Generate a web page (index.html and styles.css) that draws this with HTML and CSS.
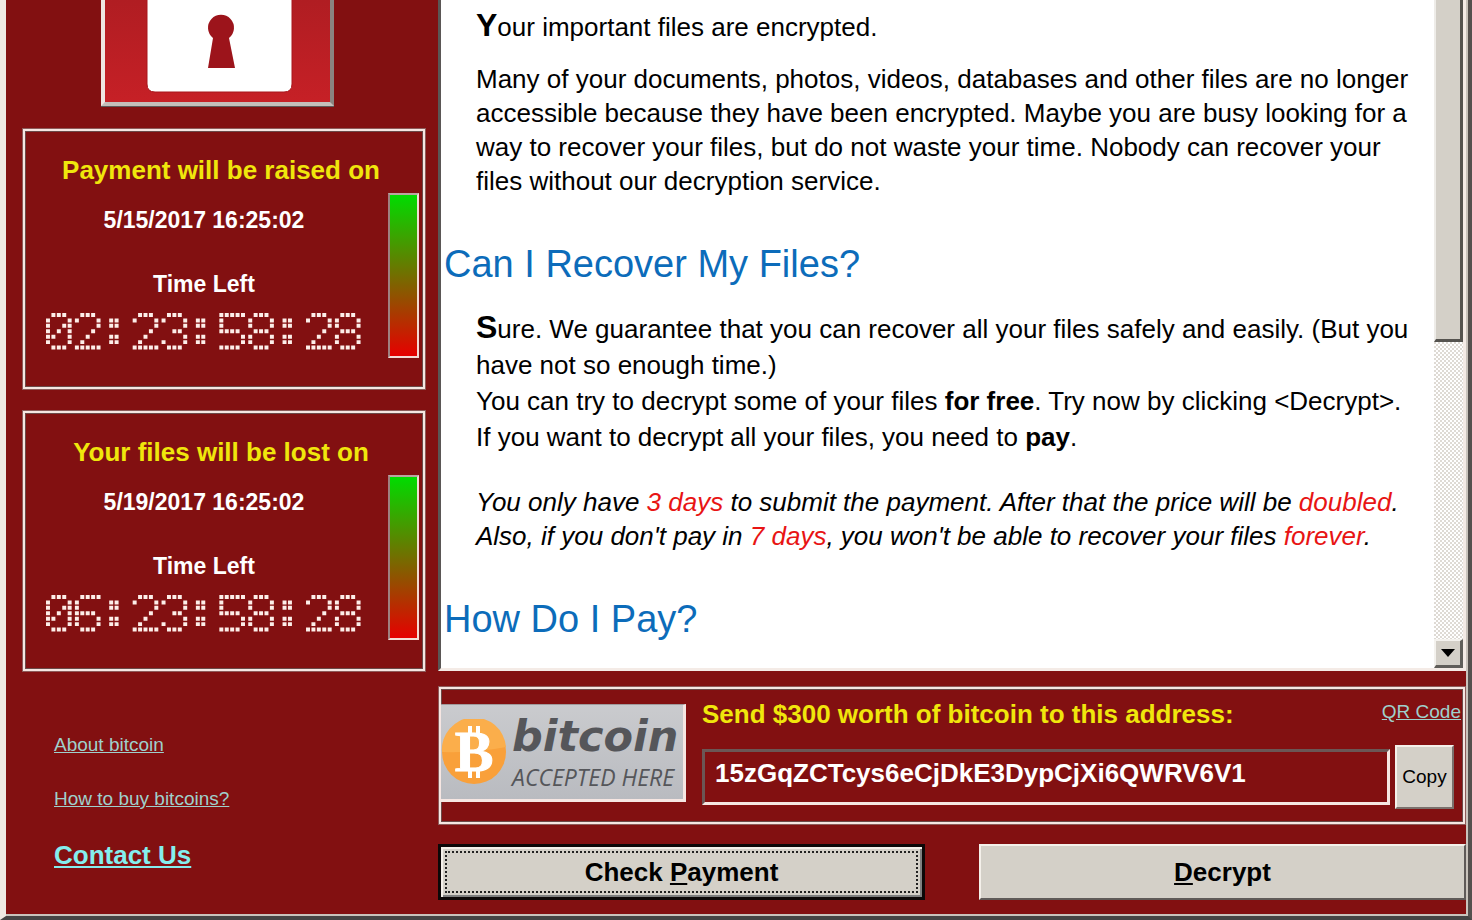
FILE: index.html
```
<!DOCTYPE html>
<html lang="en">
<head>
  <meta charset="UTF-8">
  <meta name="viewport" content="width=device-width, initial-scale=1.0">
  <title>Payment</title>

  <link rel="stylesheet" href="styles.css">
</head>
<body>
  <div class="window">
    <aside class="sidebar">
      <div class="lock">
        <svg viewBox="0 0 225 102" width="225" height="102">
          <path d="M42 -10 H187 V84 Q187 92 179 92 H50 Q42 92 42 84 Z" fill="#fff" stroke="#a8161c" stroke-width="1"/>
          <path d="M108 38 A13 13 0 1 1 124 38 L130 68 H103 Z" fill="#9c141b"/>
        </svg>
      </div>

      <section class="timer">
        <h2>Payment will be raised on</h2>
        <div class="timer-row">
          <div class="timer-main">
            <div class="date">5/15/2017 16:25:02</div>
            <div class="left">Time Left</div>
            <svg class="digits" role="img" aria-label="02:23:58:28" data-time="02:23:58:28" viewBox="0 0 175 21"></svg>
          </div>
          <div class="meter"></div>
        </div>
      </section>

      <section class="timer">
        <h2>Your files will be lost on</h2>
        <div class="timer-row">
          <div class="timer-main">
            <div class="date">5/19/2017 16:25:02</div>
            <div class="left">Time Left</div>
            <svg class="digits" role="img" aria-label="06:23:58:28" data-time="06:23:58:28" viewBox="0 0 175 21"></svg>
          </div>
          <div class="meter"></div>
        </div>
      </section>

      <nav class="links">
        <a href="#">About bitcoin</a>
        <a href="#">How to buy bitcoins?</a>
        <a href="#" class="contact">Contact Us</a>
      </nav>
    </aside>

    <main class="main">
      <div class="document">
        <div class="text">
          <p><b class="first">Y</b>our important files are encrypted.</p>
          <p class="block">Many of your documents, photos, videos, databases and other files are no longer<br>
            accessible because they have been encrypted. Maybe you are busy looking for a<br>
            way to recover your files, but do not waste your time. Nobody can recover your<br>
            files without our decryption service.</p>
          <h1>Can I Recover My Files?</h1>
          <p><b class="first">S</b>ure. We guarantee that you can recover all your files safely and easily. (But you<br>
            have not so enough time.)<br>
            You can try to decrypt some of your files <b>for free</b>. Try now by clicking &lt;Decrypt&gt;.<br>
            If you want to decrypt all your files, you need to <b>pay</b>.</p>
          <p class="note">You only have <span>3 days</span> to submit the payment. After that the price will be <span>doubled</span>.<br>
            Also, if you don't pay in <span>7 days</span>, you won't be able to recover your files <span>forever</span>.</p>
          <h1>How Do I Pay?</h1>
        </div>
        <div class="scrollbar">
          <div class="thumb"></div>
          <button class="down" aria-label="Scroll down">
            <svg viewBox="0 0 14 8" width="14" height="8"><path d="M0 0 H14 L7 8 Z"/></svg>
          </button>
        </div>
      </div>

      <section class="payment">
        <div class="logo">
          <svg viewBox="0 0 66 66" width="66" height="66">
            <circle cx="33" cy="33" r="32" fill="#f9a03a"/>
            <path d="M1 33 A32 32 0 0 1 65 28 Q35 34 1 33 Z" fill="#fbae4b"/>
            <path d="M27 7 h4 v8 h-4 z M35 7 h4 v8 h-4 z M27 51 h4 v8 h-4 z M35 51 h4 v8 h-4 z" fill="#fff"/>
            <text x="33" y="52" class="coin">B</text>
          </svg>
          <div class="logo-text">
            <div class="logo-name">bitcoin</div>
            <div class="logo-sub">ACCEPTED HERE</div>
          </div>
        </div>
        <div class="send">
          <div class="send-head">
            <label for="address">Send $300 worth of bitcoin to this address:</label>
            <a href="#">QR Code</a>
          </div>
          <div class="send-row">
            <input id="address" type="text" value="15zGqZCTcys6eCjDkE3DypCjXi6QWRV6V1" readonly>
            <button class="copy">Copy</button>
          </div>
        </div>
      </section>

      <div class="buttons">
        <button class="big default"><span>Check <u>P</u>ayment</span></button>
        <button class="big"><span><u>D</u>ecrypt</span></button>
      </div>
    </main>
  </div>
  <script>
    // 5x7 dot matrix, one string per row
    const glyphs = {
      '0': ['.XXX.', 'X...X', 'X..XX', 'X.X.X', 'XX..X', 'X...X', '.XXX.'],
      '2': ['.XXX.', 'X...X', '....X', '...X.', '..X..', '.X...', 'XXXXX'],
      '3': ['.XXX.', 'X...X', '....X', '..XX.', '....X', 'X...X', '.XXX.'],
      '5': ['XXXXX', 'X....', 'X....', 'XXXX.', '....X', '....X', 'XXXX.'],
      '6': ['.XXXX', 'X....', 'X....', 'XXXX.', 'X...X', 'X...X', '.XXX.'],
      '8': ['.XXX.', 'X...X', 'X...X', '.XXX.', 'X...X', 'X...X', '.XXX.'],
      ':': ['.....', '.XX..', '.XX..', '.....', '.XX..', '.XX..', '.....']
    };
    document.querySelectorAll('.digits').forEach(svg => {
      let d = '';
      [...svg.dataset.time].forEach((char, i) => {
        glyphs[char].forEach((row, y) => {
          [...row].forEach((dot, x) => {
            if (dot === 'X') d += `M${i * 16 + x * 3} ${y * 3}h2.2v2.2h-2.2z`;
          });
        });
      });
      svg.innerHTML = `<path d="${d}" fill="#fdeee9"/>`;
    });
  </script>
</body>
</html>
```
FILE: styles.css
```
* {
    box-sizing: border-box;
}
body {
    margin: 0;
    font-family: "Liberation Sans", Arial, sans-serif;
    background: #821011;
}
h1, h2, p {
    margin: 0;
    font-weight: normal;
}
button {
    font-family: inherit;
    padding: 0;
    color: #000;
    background: #d4d0c8;
    border-radius: 0;
}
.window {
    min-height: 100vh;
    display: flex;
    gap: 12px;
    padding-left: 16px;
    padding-right: 2px;
    border-left: 6px solid #efe9e3;
    border-right: 4px solid #55504e;
    border-bottom: 4px solid #454545;
    box-shadow: inset -2px -2px 0 #c9c3bc;
}
.sidebar {
    width: 404px;
    flex: none;
}
.lock {
    width: 233px;
    height: 106px;
    margin-left: 79px;
    background: linear-gradient(#b01d22, #c62026);
    border: solid;
    border-width: 0 4px 4px;
    border-color: #efe6e2 #8a8480 #c4beba #efe6e2;
    box-shadow: 0 1px 0 #5c5a5a;
}
.lock svg {
    display: block;
}
.timer {
    height: 260px;
    margin: 23px 1px 0;
    padding-top: 24px;
    border: 2px solid #f6e6e2;
    box-shadow: inset 0 0 0 1px #6b4a49, 0 0 0 1px #8d5b5a;
}
.timer + .timer {
    margin-top: 22px;
}
.timer h2 {
    font-size: 26px;
    line-height: 30px;
    font-weight: bold;
    text-align: center;
    color: #f0e60c;
    padding-right: 6px;
}
.timer-row {
    display: flex;
    padding: 8px 4px 0 0;
}
.timer-main {
    flex: 1;
    display: flex;
    flex-direction: column;
    align-items: center;
    padding-right: 5px;
    color: #fff;
    font-size: 23px;
    font-weight: bold;
    line-height: 28px;
}
.date {
    margin-top: 13px;
}
.left {
    margin-top: 36px;
}
.digits {
    width: 316px;
    height: 38px;
    margin-top: 15px;
}
.meter {
    width: 31px;
    height: 165px;
    background: linear-gradient(#00dc00, #e60000);
    border: 2px solid #f3dcd6;
    border-left-color: #a08080;
    border-top-color: #b9a5a0;
}
.links {
    display: flex;
    flex-direction: column;
    align-items: flex-start;
    gap: 30px;
    margin: 62px 0 0 32px;
}
a {
    color: #9fd0cc;
    font-size: 19px;
    line-height: 24px;
}
.links .contact {
    color: #84eeee;
    font-size: 26px;
    line-height: 28px;
    font-weight: bold;
}
.main {
    flex: 1;
    min-width: 0;
    display: flex;
    flex-direction: column;
}
.document {
    display: flex;
    height: 671px;
    background: #fff;
    border: solid;
    border-width: 0 3px 3px;
    border-color: #f4ebe6 #f4ebe6 #f4ebe6 #5a5655;
    overflow: hidden;
}
.text {
    flex: 1;
    white-space: nowrap;
    padding: 7px 0 0 3px;
}
.text p {
    font-size: 26px;
    line-height: 36px;
    margin-left: 32px;
}
.text .first {
    font-size: 32px;
}
.text .block {
    line-height: 34px;
    margin-top: 17px;
}
.text h1 {
    font-size: 38px;
    line-height: 44px;
    color: #0c6cba;
    margin: 44px 0 23px;
}
.text .note {
    font-style: italic;
    line-height: 34px;
    margin-top: 30px;
}
.note span {
    color: #e81414;
}
.scrollbar {
    width: 29px;
    flex: none;
    display: flex;
    flex-direction: column;
    justify-content: space-between;
    background: repeating-conic-gradient(#dedad4 0 25%, #fff 0 50%) 0 0 / 4px 4px;
}
.thumb {
    height: 342px;
    background: #d4d0c8;
    border: solid;
    border-width: 0 3px 3px 2px;
    border-color: #fff #55534f #55534f #eeece8;
}
.down {
    height: 29px;
    border: solid;
    border-width: 2px 3px 3px 2px;
    border-color: #f4f2ee #605e5a #605e5a #f4f2ee;
    display: flex;
    align-items: center;
    justify-content: center;
}
.payment {
    display: flex;
    gap: 16px;
    height: 137px;
    margin: 16px 1px 0;
    border: 2px solid #f6e6e2;
    box-shadow: inset 0 0 0 1px #6b4a49, 0 0 0 1px #8d5b5a;
}
.logo {
    display: flex;
    align-items: center;
    gap: 5px;
    width: 245px;
    height: 98px;
    margin-top: 15px;
    background: linear-gradient(#cacbce, #b9bbc0);
    border: solid;
    border-width: 1px 3px 3px 0;
    border-color: #a09a9c #f6e6e2 #f6e6e2;
}
.logo > svg {
    flex: none;
}
.coin {
    font-family: "Liberation Serif", serif;
    font-size: 58px;
    font-weight: bold;
    text-anchor: middle;
    fill: #fff;
    stroke: #fff;
    stroke-width: 1px;
}
.logo-text {
    color: #55565a;
    font-style: italic;
    white-space: nowrap;
}
.logo-name {
    font-family: "DejaVu Sans", sans-serif;
    font-size: 43px;
    font-weight: bold;
    line-height: 50px;
}
.logo-sub {
    font-family: "Open Sans", sans-serif;
    font-size: 23px;
    line-height: 32px;
}
.send {
    flex: 1;
    min-width: 0;
}
.send-head {
    display: flex;
    justify-content: space-between;
    padding: 8px 2px 0 0;
}
.send-head label {
    font-size: 26px;
    line-height: 34px;
    font-weight: bold;
    color: #f0e60c;
}
.send-head a {
    line-height: 30px;
}
.send-row {
    display: flex;
    align-items: center;
    gap: 5px;
    padding: 14px 9px 0 0;
}
.send-row input {
    flex: 1;
    min-width: 0;
    height: 56px;
    padding: 0 10px 8px;
    font-family: inherit;
    font-size: 26px;
    font-weight: bold;
    color: #fff;
    background: #821011;
    border: 3px solid;
    border-color: #6b5655 #f6e6e2 #f6e6e2 #6b5655;
    outline: none;
}
.copy {
    width: 59px;
    height: 64px;
    font-size: 19px;
    border: 2px solid;
    border-color: #f4f0ea #7a706c #7a706c #f4f0ea;
}
.buttons {
    display: grid;
    grid-template-columns: 1fr 1fr;
    gap: 54px;
    margin-top: 20px;
    margin-bottom: 16px;
}
.big {
    height: 56px;
    font-size: 26px;
    font-weight: bold;
    border: 2px solid;
    border-color: #f4f0ea #5f5a58 #5f5a58 #f4f0ea;
}
.default {
    border: 3px solid #0c0808;
    box-shadow: inset 2px 2px 0 #f4f0ea, inset -2px -2px 0 #7f8080;
    padding: 4px;
}
.default span {
    display: block;
    height: 100%;
    line-height: 38px;
    border: 2px dotted #222;
}
```
